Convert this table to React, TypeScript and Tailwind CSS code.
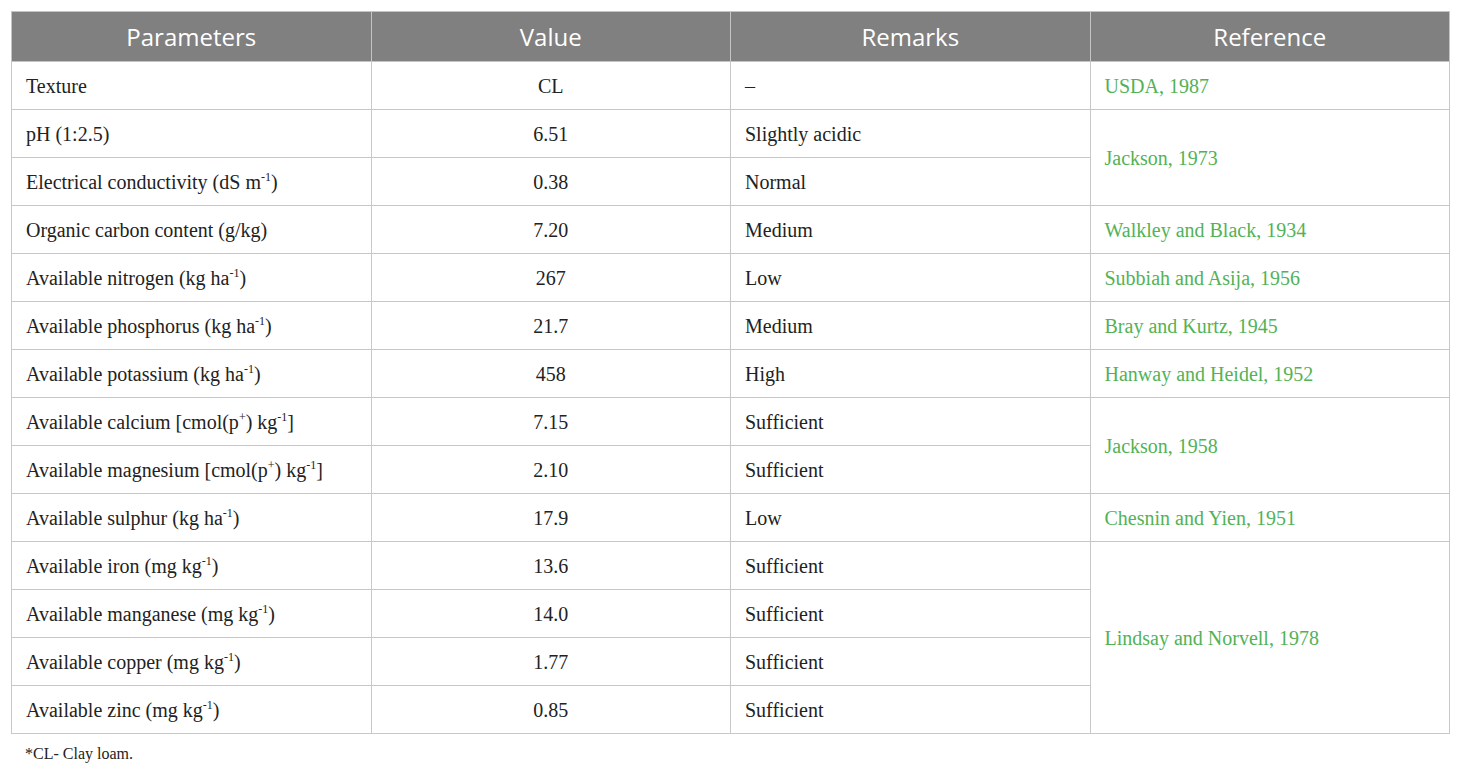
import React from 'react';

type Row = {
  param: React.ReactNode;
  value: string;
  remark: string;
  ref?: string;
  span?: number;
};

const Sup = ({ children }: { children: React.ReactNode }) => (
  <sup className="text-[12px] relative -top-[8px] align-baseline">{children}</sup>
);

const rows: Row[] = [
  { param: 'Texture', value: 'CL', remark: '–', ref: 'USDA, 1987' },
  { param: 'pH (1:2.5)', value: '6.51', remark: 'Slightly acidic', ref: 'Jackson, 1973', span: 2 },
  { param: <>Electrical conductivity (dS m<Sup>-1</Sup>)</>, value: '0.38', remark: 'Normal' },
  { param: 'Organic carbon content (g/kg)', value: '7.20', remark: 'Medium', ref: 'Walkley and Black, 1934' },
  { param: <>Available nitrogen (kg ha<Sup>-1</Sup>)</>, value: '267', remark: 'Low', ref: 'Subbiah and Asija, 1956' },
  { param: <>Available phosphorus (kg ha<Sup>-1</Sup>)</>, value: '21.7', remark: 'Medium', ref: 'Bray and Kurtz, 1945' },
  { param: <>Available potassium (kg ha<Sup>-1</Sup>)</>, value: '458', remark: 'High', ref: 'Hanway and Heidel, 1952' },
  { param: <>Available calcium [cmol(p<Sup>+</Sup>) kg<Sup>-1</Sup>]</>, value: '7.15', remark: 'Sufficient', ref: 'Jackson, 1958', span: 2 },
  { param: <>Available magnesium [cmol(p<Sup>+</Sup>) kg<Sup>-1</Sup>]</>, value: '2.10', remark: 'Sufficient' },
  { param: <>Available sulphur (kg ha<Sup>-1</Sup>)</>, value: '17.9', remark: 'Low', ref: 'Chesnin and Yien, 1951' },
  { param: <>Available iron (mg kg<Sup>-1</Sup>)</>, value: '13.6', remark: 'Sufficient', ref: 'Lindsay and Norvell, 1978', span: 4 },
  { param: <>Available manganese (mg kg<Sup>-1</Sup>)</>, value: '14.0', remark: 'Sufficient' },
  { param: <>Available copper (mg kg<Sup>-1</Sup>)</>, value: '1.77', remark: 'Sufficient' },
  { param: <>Available zinc (mg kg<Sup>-1</Sup>)</>, value: '0.85', remark: 'Sufficient' },
];

const headers = ['Parameters', 'Value', 'Remarks', 'Reference'];

export default function App() {
  return (
    <div className="bg-white w-[1460px] h-[773px] pt-[11px] pl-[11px] font-['Liberation_Serif',serif] text-[#222]">
      <table className="w-[1439px] table-fixed border-collapse">
        <thead>
          <tr className="h-[50px] bg-[#808080]">
            {headers.map((h) => (
              <th
                key={h}
                className="border border-[#c4c4c4] text-white font-normal text-[24px] text-center font-['Open_Sans',sans-serif] leading-none"
              >
                {h}
              </th>
            ))}
          </tr>
        </thead>
        <tbody className="text-[20px] leading-none">
          {rows.map((r, i) => (
            <tr key={i} className="h-[48px]">
              <td className="border border-[#c8c8c8] pl-[14px]">{r.param}</td>
              <td className="border border-[#c8c8c8] text-center">{r.value}</td>
              <td className="border border-[#c8c8c8] pl-[14px]">{r.remark}</td>
              {r.ref && (
                <td rowSpan={r.span ?? 1} className="border border-[#c8c8c8] pl-[14px] text-[#52b256]">
                  {r.ref}
                </td>
              )}
            </tr>
          ))}
        </tbody>
      </table>
      <p className="pl-[14px] pt-[8px] text-[16px]">*CL- Clay loam.</p>
    </div>
  );
}
